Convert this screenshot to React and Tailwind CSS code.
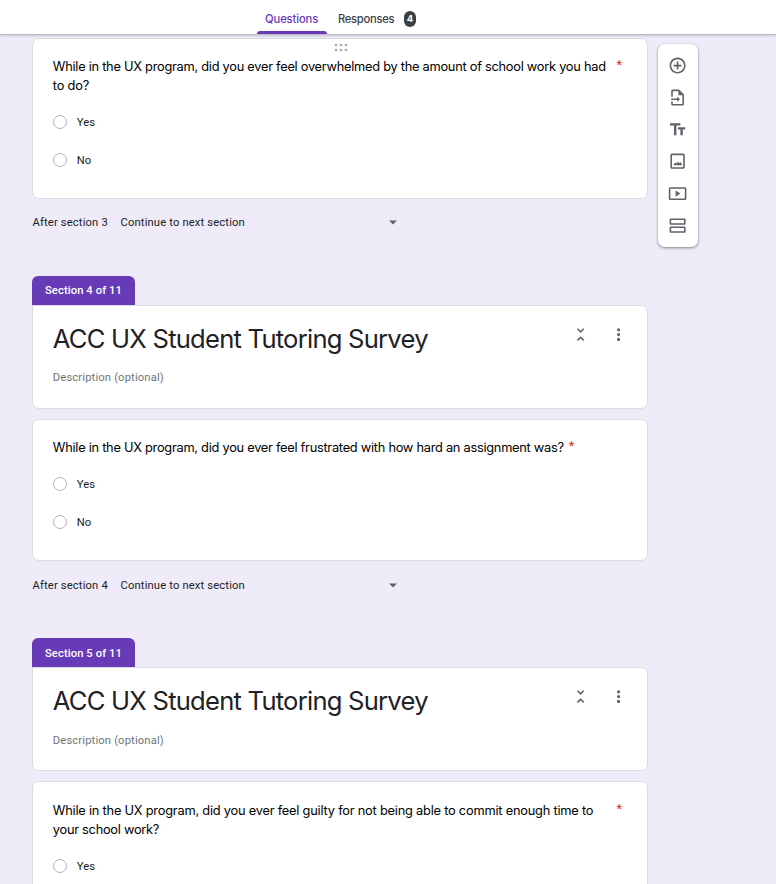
const display = "font-['Inter','Liberation_Sans',sans-serif]";

function Header() {
  return (
    <header className="relative z-10 flex h-[35px] bg-white pl-[257px] border-b border-[#bdbcc4] shadow-[0_1px_2px_rgba(60,64,67,0.22)] text-[11.2px] leading-4 font-medium font-['Inter','Liberation_Sans',sans-serif]">
      <div className="relative w-[70px] pt-[11px] pl-2 text-[#673ab7]">
        <span className="tracking-[-0.1px]">Questions</span>
        <div className="absolute inset-x-0 bottom-0 h-[3px] rounded-t-[3px] bg-[#673ab7]" />
      </div>
      <div className="flex items-start gap-[10px] pt-[11px] pl-[11px] text-[#3c4043]">
        <span className="w-[56px] whitespace-nowrap tracking-[-0.28px]">Responses</span>
        <span className="flex h-4 w-3 items-center justify-center rounded-[6px] bg-[#3c4043] text-[9.6px] font-bold text-white">4</span>
      </div>
    </header>
  );
}

function Option({ label }) {
  return (
    <div className="flex h-[38px] items-start">
      <span className="size-[14px] rounded-full border border-[#b4b4b4]" />
      <span className="ml-[10px] pt-px text-[11.2px] leading-[14px] tracking-[0.08px] text-[#202124]">{label}</span>
    </div>
  );
}

function Question({ lines, height, inlineStar, grip, options = ['Yes', 'No'] }) {
  return (
    <section className={`relative ${height} rounded-[7px] border border-[#dadce0] bg-white pl-[19.8px] pt-[18.2px]`}>
      {grip && (
        <svg className="absolute left-[301px] top-[4px]" width="14" height="9" fill="#a9a9a9">
          {[2, 7, 12].map((x) => [2, 7].map((y) => <circle key={`${x}${y}`} cx={x} cy={y} r="1.3" />))}
        </svg>
      )}
      <div className="flex">
        <div className={`${inlineStar ? 'w-[516px]' : 'w-[563.6px]'} ${display} text-[12.8px] leading-[19.2px] text-black`}>
          {lines.map((l) => (
            <div key={l.text} className={`whitespace-nowrap ${l.track}`}>{l.text}</div>
          ))}
        </div>
        <span className="-mt-[2px] text-[12.8px] leading-[19.2px] text-[#d93025]">*</span>
      </div>
      <div className="pt-[19.6px]">
        {options.map((o) => <Option key={o} label={o} />)}
      </div>
    </section>
  );
}

function AfterSection({ n }) {
  return (
    <div className="flex h-[77px] items-start pl-[0.5px] pt-[16.3px] text-[11.2px] leading-4 tracking-[0.16px] text-[#202124]">
      <span className="w-[88px]">After section {n}</span>
      <span className="w-[268px]">Continue to next section</span>
      <svg className="mt-[5px]" width="9" height="5" fill="#5f6368"><path d="M0 .5h8L4 4.500z" /></svg>
    </div>
  );
}

function SectionHead({ n }) {
  return (
    <>
      <div className="h-[29px] w-[103px] rounded-t-[6px] bg-[#673ab7] pl-[13px] pt-[7.3px] text-[11.2px] font-medium leading-4 tracking-[0.1px] text-white whitespace-nowrap">
        Section {n} of 11
      </div>
      <section className="mb-[10px] flex h-[104px] justify-between rounded-[7px] rounded-tl-none border border-[#dadce0] bg-white pl-[19.8px]">
        <div>
          <h1 className={`${display} pt-[17px] text-[25.6px] leading-8 tracking-[-0.77px] text-[#202124] whitespace-nowrap`}>
            ACC UX Student Tutoring Survey
          </h1>
          <p className="pt-[15.3px] text-[11.2px] leading-4 tracking-[0.16px] text-[#70757a]">Description (optional)</p>
        </div>
        <div className="flex gap-[19px] pr-[19px] pt-[19px] text-[#5f6368]">
          <svg width="19.2" height="19.2" viewBox="0 0 24 24" fill="currentColor">
            <path d="M7.41 18.59L8.83 20 12 16.83 15.17 20l1.41-1.41L12 14l-4.59 4.59zm9.18-13.18L15.17 4 12 7.17 8.83 4 7.41 5.41 12 10l4.59-4.59z" />
          </svg>
          <svg width="19.2" height="19.2" viewBox="0 0 24 24" fill="currentColor">
            <path d="M12 8c1.1 0 2-.9 2-2s-.9-2-2-2-2 .9-2 2 .9 2 2 2zm0 2c-1.1 0-2 .9-2 2s.9 2 2 2 2-.9 2-2-.9-2-2-2zm0 6c-1.1 0-2 .9-2 2s.9 2 2 2 2-.9 2-2-.9-2-2-2z" />
          </svg>
        </div>
      </section>
    </>
  );
}

const tools = [
  'M13 7h-2v4H7v2h4v4h2v-4h4v-2h-4V7zm-1-5C6.48 2 2 6.48 2 12s4.48 10 10 10 10-4.48 10-10S17.52 2 12 2zm0 18c-4.41 0-8-3.59-8-8s3.59-8 8-8 8 3.59 8 8-3.59 8-8 8z',
  'M14 2H6c-1.1 0-2 .9-2 2v7h2V4h7v5h5v11H6v-3H4v3c0 1.1.9 2 2 2h12c1.1 0 2-.9 2-2V8l-6-6zM11.500 10.500V13H4v2h7.500v2.500l3.500-3.500z',
  'M2.500 4v3h5v12h3V7h5V4h-13zM21.500 9h-9v3h3v7h3v-7h3z',
  'M19 4v15H5V4h14m0-2H5c-1.100 0-2 .9-2 2v15c0 1.100.9 2 2 2h14c1.100 0 2-.9 2-2V4c0-1.100-.9-2-2-2zM6.500 16.500l2.500-3.500 1.800 1.500 1.700-2.500 1.500 2 1.500-1.500 2.500 4z',
  'M9.500 8v8l6-4zM21 4H3c-1.100 0-2 .9-2 2v12c0 1.100.9 2 2 2h18c1.100 0 2-.9 2-2V6c0-1.100-.9-2-2-2zm0 14H3V6h18v12z',
  'M20 15v4H4v-4h16m1-2H3c-.55 0-1 .45-1 1v6c0 .55.45 1 1 1h18c.55 0 1-.45 1-1v-6c0-.55-.45-1-1-1zM20 5v4H4V5h16m1-2H3c-.55 0-1 .45-1 1v6c0 .55.45 1 1 1h18c.55 0 1-.45 1-1V4c0-.55-.45-1-1-1z',
];

function Toolbar() {
  return (
    <aside className="ml-[10px] mt-[9px] flex h-[203px] w-[40px] flex-col items-center gap-[12.8px] rounded-[7px] bg-white pt-[11.8px] text-[#5f6368] shadow-[0_1px_3px_rgba(60,64,67,0.6)]">
      {tools.map((d) => (
        <svg key={d} className="size-[19.2px] shrink-0" viewBox="0 0 24 24" fill="currentColor"><path d={d} /></svg>
      ))}
    </aside>
  );
}

export default function App() {
  return (
    <div className="h-[884px] w-[776px] overflow-hidden bg-[#efebf8] font-['Roboto','Liberation_Sans',sans-serif]">
      <Header />
      <div className="flex items-start pl-8">
        <main className="w-[616px] pt-[3px]">
          <Question
            grip
            height="h-[161px]"
            lines={[
              { text: 'While in the UX program, did you ever feel overwhelmed by the amount of school work you had', track: 'tracking-[-0.256px]' },
              { text: 'to do?', track: 'tracking-[-0.2px]' },
            ]}
          />
          <AfterSection n={3} />
          <SectionHead n={4} />
          <Question
            inlineStar
            height="h-[142.4px]"
            lines={[{ text: 'While in the UX program, did you ever feel frustrated with how hard an assignment was?', track: 'tracking-[-0.26px]' }]}
          />
          <AfterSection n={4} />
          <SectionHead n={5} />
          <Question
            height="h-[161px]"
            options={['Yes']}
            lines={[
              { text: 'While in the UX program, did you ever feel guilty for not being able to commit enough time to', track: 'tracking-[-0.213px]' },
              { text: 'your school work?', track: 'tracking-[-0.26px]' },
            ]}
          />
        </main>
        <Toolbar />
      </div>
    </div>
  );
}
